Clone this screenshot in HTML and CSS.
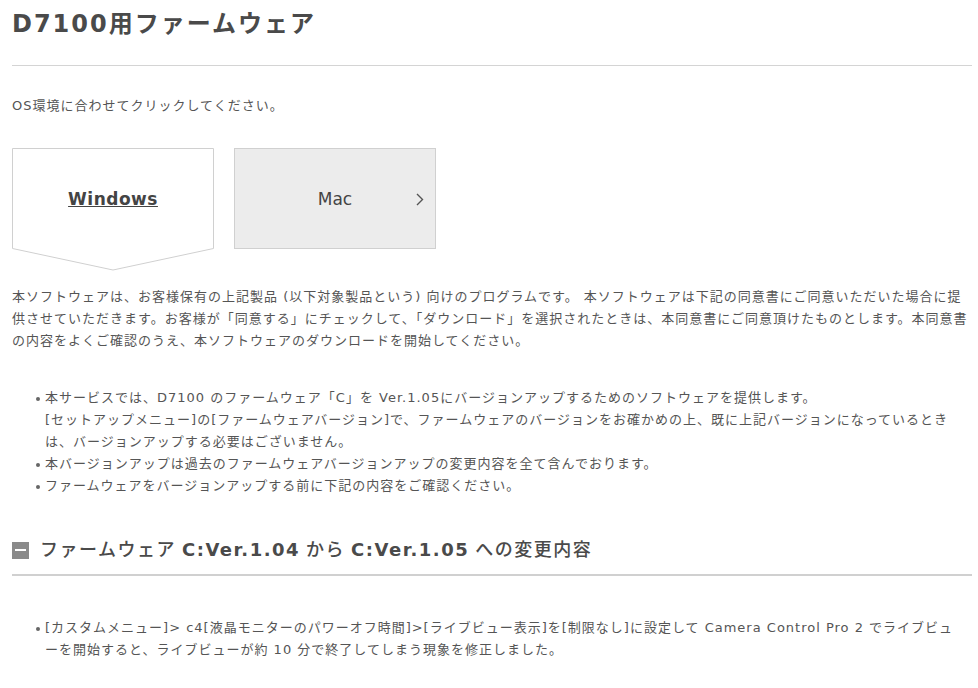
FILE: index.html
```html
<!DOCTYPE html>
<html lang="ja">
<head>
    <meta charset="UTF-8">
    <meta name="viewport" content="width=device-width, initial-scale=1.0">
    <title>D7100用ファームウェア</title>
    <link rel="stylesheet" href="styles.css">
</head>
<body>
    <div class="page">
        <h1 class="title">D7100用ファームウェア</h1>

        <p class="lead">OS環境に合わせてクリックしてください。</p>

        <div class="os-tabs">
            <a class="os-tab os-tab-active" href="#">
                <svg class="tab-shape" width="202" height="123" viewBox="0 0 202 123">
                    <polygon points="0.5,0.5 201.5,0.5 201.5,100.5 101,122 0.5,100.5" fill="#fff" stroke="#d0d0d0" stroke-width="1"/>
                </svg>
                <span class="tab-label">Windows</span>
            </a>
            <a class="os-tab os-tab-other" href="#">
                <span class="tab-label">Mac</span>
                <svg class="chevron" width="8" height="13" viewBox="0 0 8 13">
                    <polyline points="1,1 6.5,6.5 1,12" fill="none" stroke="#555" stroke-width="1.4"/>
                </svg>
            </a>
        </div>

        <p class="notice">本ソフトウェアは、お客様保有の上記製品 (以下対象製品という) 向けのプログラムです。 本ソフトウェアは下記の同意書にご同意いただいた場合に提供させていただきます。お客様が「同意する」にチェックして、「ダウンロード」を選択されたときは、本同意書にご同意頂けたものとします。本同意書の内容をよくご確認のうえ、本ソフトウェアのダウンロードを開始してください。</p>

        <ul class="notes">
            <li>本サービスでは、D7100 のファームウェア「C」を Ver.1.05にバージョンアップするためのソフトウェアを提供します。<br>[セットアップメニュー]の[ファームウェアバージョン]で、ファームウェアのバージョンをお確かめの上、既に上記バージョンになっているときは、バージョンアップする必要はございません。</li>
            <li>本バージョンアップは過去のファームウェアバージョンアップの変更内容を全て含んでおります。</li>
            <li>ファームウェアをバージョンアップする前に下記の内容をご確認ください。</li>
        </ul>

        <h2 class="section-title"><span class="toggle"></span>ファームウェア <b>C:Ver.1.04</b> から <b>C:Ver.1.05</b> への変更内容</h2>

        <ul class="notes changes">
            <li>[カスタムメニュー]&gt; c4[液晶モニターのパワーオフ時間]&gt;[ライブビュー表示]を[制限なし]に設定して Camera Control Pro 2 でライブビューを開始すると、ライブビューが約 10 分で終了してしまう現象を修正しました。</li>
        </ul>
    </div>
</body>
</html>
```

FILE: styles.css
```css
body {
    margin: 0;
    font-family: "DejaVu Sans", "Noto Sans CJK JP", sans-serif;
    color: #555;
    background: #fff;
}
.page {
    width: 960px;
    margin-left: 12px;
}
.title {
    margin: 0;
    padding: 6px 0 23px;
    font-size: 24px;
    line-height: 36px;
    letter-spacing: 2px;
    font-weight: bold;
    color: #4a4a4a;
    border-bottom: 1px solid #d4d4d4;
}
.lead {
    margin: 29px 0 0;
    font-size: 13px;
    line-height: 22px;
    letter-spacing: 1px;
}
.os-tabs {
    display: flex;
    align-items: flex-start;
    gap: 20px;
    margin-top: 31px;
}
.os-tab {
    position: relative;
    display: flex;
    align-items: center;
    justify-content: center;
    width: 202px;
    color: #444;
    text-decoration: none;
    font-size: 17px;
}
.os-tab-active {
    height: 123px;
}
.os-tab-active .tab-label {
    position: relative;
    margin-top: -22px;
    font-weight: bold;
    text-decoration: underline;
    letter-spacing: 0.5px;
}
.tab-shape {
    position: absolute;
    left: 0;
    top: 0;
}
.os-tab-other {
    box-sizing: border-box;
    height: 101px;
    background: #ececec;
    border: 1px solid #d0d0d0;
}
.chevron {
    position: absolute;
    right: 11px;
    top: 44px;
}
.notice {
    margin: 15px 0 0;
    font-size: 13px;
    line-height: 22px;
    letter-spacing: 1px;
}
.notes {
    margin: 35px 0 0;
    padding: 0 18px 0 33px;
    font-size: 13px;
    line-height: 22px;
    letter-spacing: 1px;
}
.notes li {
    list-style: none;
    position: relative;
}
.notes li::before {
    content: "";
    position: absolute;
    left: -9px;
    top: 10px;
    width: 4px;
    height: 4px;
    border-radius: 50%;
    background: #666;
}
.section-title {
    display: flex;
    align-items: center;
    margin: 36px 0 0;
    padding: 2px 0 9px;
    font-size: 18px;
    line-height: 30px;
    font-weight: 500;
    letter-spacing: 1.5px;
    color: #4a4a4a;
    border-bottom: 2px solid #d0d0d0;
}
.section-title b {
    font-weight: bold;
    margin: 0 6px;
}
.toggle {
    position: relative;
    width: 17px;
    height: 17px;
    margin-right: 11px;
    background: #8a8a8a;
}
.toggle::after {
    content: "";
    position: absolute;
    left: 3px;
    right: 3px;
    top: 7px;
    height: 2px;
    background: #fff;
}
.changes {
    margin-top: 41px;
}
```
